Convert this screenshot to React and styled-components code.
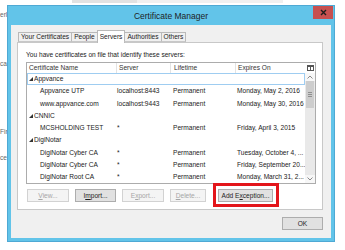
import styled, { createGlobalStyle } from 'styled-components';

const GlobalStyle = createGlobalStyle`
  html, body { margin: 0; padding: 0; background: #fff; }
  body { font-family: "Liberation Sans", Arial, sans-serif; }
  * { box-sizing: border-box; }
`;

const Page = styled.div`
  width: 345px;
  height: 250px;
  display: flex;
  overflow: hidden;
  background: #fff;
`;

const BehindEdge = styled.div`
  width: 7px;
  flex: none;
  overflow: hidden;
  padding-top: 11px;
  font-size: 6.6px;
  line-height: 8px;
  color: #666;
  white-space: nowrap;
`;

const Fragment = styled.div`
  margin-top: ${(p) => p.$gap || 0}px;
`;

const Stage = styled.div`
  flex: 1;
  display: flex;
  flex-direction: column;
`;

const BackStrip = styled.div`
  height: 3px;
  width: 211px;
  margin: 0 0 2px 65px;
  background: linear-gradient(to right, #e2e2e2 0 65px, #f0f0f0 65px);
`;

const Dialog = styled.div`
  width: 328px;
  height: 237px;
  display: flex;
  flex-direction: column;
  background: #62c4e9;
  border: 1px solid #4ea9d4;
`;

const TitleBar = styled.div`
  height: 19px;
  display: grid;
  grid-template-columns: 1fr auto 1fr;
  align-items: start;
`;

const Title = styled.div`
  grid-column: 2;
  align-self: center;
  font-size: 8.5px;
  color: #1e1e1e;
  padding-top: 1px;
`;

const Close = styled.div`
  grid-column: 3;
  justify-self: end;
  width: 20px;
  height: 13px;
  margin-right: 1px;
  background: #c75050;
  display: flex;
  align-items: center;
  justify-content: center;
`;

const Body = styled.div`
  flex: 1;
  margin: 0 3px 3px;
  padding: 5px 8px 0 6px;
  background: #f0f0f0;
  display: flex;
  flex-direction: column;
`;

const TabBar = styled.div`
  display: flex;
  align-items: flex-end;
  height: 12px;
  padding-left: 1px;
  position: relative;
  z-index: 1;
`;

const Tab = styled.div`
  height: ${(p) => (p.$active ? 13 : 10)}px;
  margin-bottom: ${(p) => (p.$active ? -1 : 0)}px;
  margin-left: -1px;
  padding: 0 2px;
  border: 1px solid #b9b9b9;
  border-bottom: ${(p) => (p.$active ? 'none' : '1px solid #c8c8c8')};
  background: ${(p) => (p.$active ? '#fff' : '#f0f0f0')};
  font-size: 6.6px;
  line-height: ${(p) => (p.$active ? 11 : 8)}px;
  color: #222;
  white-space: nowrap;
  &:first-child { margin-left: 0; }
`;

const Panel = styled.div`
  height: 168px;
  background: #fff;
  border: 1px solid #c8c8c8;
  padding: 0 6px 0 8px;
  display: flex;
  flex-direction: column;
`;

const Intro = styled.div`
  margin-top: 7px;
  font-size: 6.6px;
  line-height: 9px;
  color: #222;
`;

const ListBox = styled.div`
  margin-top: 3px;
  height: 122px;
  border: 1px solid #acacac;
  display: grid;
  grid-template-columns: 1fr 10px;
  grid-template-rows: 10px 1fr;
  overflow: hidden;
`;

const cols = '89px 54px 65px 70px';

const Header = styled.div`
  display: grid;
  grid-template-columns: ${cols};
  font-size: 6.6px;
  line-height: 10px;
  color: #333;
`;

const HeadCell = styled.div`
  padding-left: ${(p) => p.$pad}px;
  border-left: ${(p) => (p.$sep ? '1px solid #e3e3e3' : 'none')};
  white-space: nowrap;
  overflow: hidden;
`;

const Picker = styled.div`
  display: flex;
  align-items: center;
  justify-content: center;
`;

const Rows = styled.div`
  overflow: hidden;
`;

const Row = styled.div`
  display: grid;
  grid-template-columns: ${cols};
  height: 12.25px;
  font-size: 6.6px;
  line-height: 12.25px;
  color: #222;
  box-shadow: ${(p) => (p.$focus ? 'inset 0 0 0 1px #9fcdf1' : 'none')};
`;

const Group = styled.div`
  grid-column: 1 / -1;
  padding-left: 2px;
  display: flex;
  align-items: center;
  gap: 1px;
`;

const Cell = styled.div`
  padding-left: ${(p) => p.$pad}px;
  white-space: nowrap;
  overflow: hidden;
`;

const Scrollbar = styled.div`
  display: flex;
  flex-direction: column;
  background: #e9e9e9;
`;

const Arrow = styled.div`
  height: 8px;
  background: #f7f7f7;
  display: flex;
  align-items: center;
  justify-content: center;
`;

const Thumb = styled.div`
  height: 27px;
  margin: 0 1px;
  background: #cdcdcd;
  display: flex;
  align-items: center;
  justify-content: center;
`;

const Track = styled.div`
  flex: 1;
`;

const ButtonRow = styled.div`
  margin-top: 5px;
  padding-left: 1px;
  display: flex;
  gap: 6px;
`;

const Button = styled.div`
  position: relative;
  width: ${(p) => p.$w}px;
  height: 13px;
  margin-left: ${(p) => p.$ml || 0}px;
  border: 1px solid ${(p) => (p.$disabled ? '#d2d2d2' : '#adadad')};
  background: ${(p) => (p.$disabled ? '#f4f4f4' : '#e1e1e1')};
  color: ${(p) => (p.$disabled ? '#a6a6a6' : '#1e1e1e')};
  font-size: 6.6px;
  line-height: 11px;
  text-align: center;
  white-space: nowrap;
  ${(p) =>
    p.$highlight &&
    `&::after {
      content: '';
      position: absolute;
      inset: -7px -7px -6px -6px;
      border: 3px solid #e3151a;
    }`}
`;

const Footer = styled.div`
  flex: 1;
  display: flex;
  justify-content: flex-end;
  align-items: flex-start;
  padding-top: 7px;
`;

const Triangle = () => (
  <svg width="4" height="4" viewBox="0 0 4 4">
    <path d="M4 0 L4 4 L0 4 Z" fill="#333" />
  </svg>
);

const groups = [
  {
    name: 'Appvance',
    items: [
      ['Appvance UTP', 'localhost:8443', 'Permanent', 'Monday, May 2, 2016'],
      ['www.appvance.com', 'localhost:9443', 'Permanent', 'Monday, May 30, 2016'],
    ],
  },
  { name: 'CNNIC', items: [['MCSHOLDING TEST', '*', 'Permanent', 'Friday, April 3, 2015']] },
  {
    name: 'DigiNotar',
    items: [
      ['DigiNotar Cyber CA', '*', 'Permanent', 'Tuesday, October 4, ...'],
      ['DigiNotar Cyber CA', '*', 'Permanent', 'Friday, September 20...'],
      ['DigiNotar Root CA', '*', 'Permanent', 'Monday, March 31, 2...'],
    ],
  },
];

const tabs = ['Your Certificates', 'People', 'Servers', 'Authorities', 'Others'];

export default function App() {
  return (
    <>
      <GlobalStyle />
      <Page>
        <BehindEdge>
          <Fragment>erl</Fragment>
          <Fragment $gap={41}>ca</Fragment>
          <Fragment $gap={60}>Fir</Fragment>
          <Fragment $gap={18}>ce</Fragment>
        </BehindEdge>
        <Stage>
          <BackStrip />
          <Dialog>
            <TitleBar>
              <Title>Certificate Manager</Title>
              <Close>
                <svg width="7" height="7" viewBox="0 0 7 7">
                  <path d="M1 1 L6 6 M6 1 L1 6" stroke="#1d1d1d" strokeWidth="1.4" />
                </svg>
              </Close>
            </TitleBar>
            <Body>
              <TabBar>
                {tabs.map((t) => (
                  <Tab key={t} $active={t === 'Servers'}>
                    {t}
                  </Tab>
                ))}
              </TabBar>
              <Panel>
                <Intro>You have certificates on file that identify these servers:</Intro>
                <ListBox>
                  <Header>
                    <HeadCell $pad={2}>Certificate Name</HeadCell>
                    <HeadCell $pad={2} $sep>Server</HeadCell>
                    <HeadCell $pad={3} $sep>Lifetime</HeadCell>
                    <HeadCell $pad={2} $sep>Expires On</HeadCell>
                  </Header>
                  <Picker>
                    <svg width="7" height="6" viewBox="0 0 7 6">
                      <rect x="0.5" y="0.5" width="6" height="5" fill="none" stroke="#555" />
                      <rect x="0" y="0" width="7" height="2" fill="#555" />
                      <path d="M3.5 2 V6" stroke="#555" />
                    </svg>
                  </Picker>
                  <Rows>
                    {groups.map((g, gi) => (
                      <div key={g.name}>
                        <Row $focus={gi === 0}>
                          <Group>
                            <Triangle />
                            {g.name}
                          </Group>
                        </Row>
                        {g.items.map((it, i) => (
                          <Row key={i}>
                            <Cell $pad={13}>{it[0]}</Cell>
                            <Cell $pad={1}>{it[1]}</Cell>
                            <Cell $pad={3}>{it[2]}</Cell>
                            <Cell $pad={2}>{it[3]}</Cell>
                          </Row>
                        ))}
                      </div>
                    ))}
                  </Rows>
                  <Scrollbar>
                    <Arrow>
                      <svg width="6" height="4" viewBox="0 0 6 4">
                        <path d="M0.5 3.5 L3 1 L5.5 3.5" fill="none" stroke="#8a8a8a" />
                      </svg>
                    </Arrow>
                    <Thumb>
                      <svg width="4" height="5" viewBox="0 0 4 5">
                        <path d="M0 0.5 H4 M0 2.5 H4 M0 4.5 H4" stroke="#8f8f8f" />
                      </svg>
                    </Thumb>
                    <Track />
                    <Arrow>
                      <svg width="6" height="4" viewBox="0 0 6 4">
                        <path d="M0.5 0.5 L3 3 L5.5 0.5" fill="none" stroke="#8a8a8a" />
                      </svg>
                    </Arrow>
                  </Scrollbar>
                </ListBox>
                <ButtonRow>
                  <Button $w={42} $disabled><u>V</u>iew...</Button>
                  <Button $w={41}>I<u>m</u>port...</Button>
                  <Button $w={42} $disabled>E<u>x</u>port...</Button>
                  <Button $w={36} $disabled><u>D</u>elete...</Button>
                  <Button $w={55} $ml={6} $highlight>Add E<u>x</u>ception...</Button>
                </ButtonRow>
              </Panel>
              <Footer>
                <Button $w={41}>OK</Button>
              </Footer>
            </Body>
          </Dialog>
        </Stage>
      </Page>
    </>
  );
}
